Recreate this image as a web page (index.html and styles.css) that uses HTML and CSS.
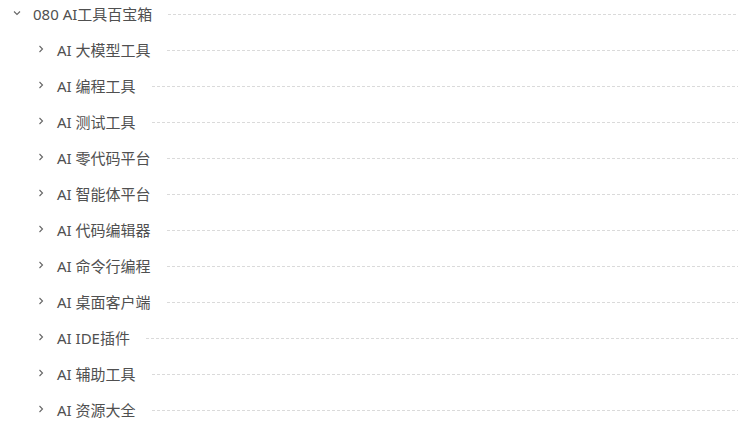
FILE: index.html
```html
<!DOCTYPE html>
<html lang="zh-CN">
<head>
    <meta charset="UTF-8">
    <meta name="viewport" content="width=device-width, initial-scale=1.0">
    <title>080 AI工具百宝箱</title>
    <link rel="stylesheet" href="styles.css">
</head>
<body>
    <ul class="toc">
        <li class="toc-item open">
            <div class="toc-row">
                <svg class="arrow" width="8" height="8" viewBox="0 0 8 8"><path d="M1 2.5 L4 5.5 L7 2.5"/></svg>
                <span class="toc-title">080 AI工具百宝箱</span>
                <span class="leader"></span>
            </div>
            <ul class="toc-children">
                <li class="toc-row child"><svg class="arrow" width="8" height="8" viewBox="0 0 8 8"><path d="M2.5 1 L5.5 4 L2.5 7"/></svg><span class="toc-title">AI 大模型工具</span><span class="leader"></span></li>
                <li class="toc-row child"><svg class="arrow" width="8" height="8" viewBox="0 0 8 8"><path d="M2.5 1 L5.5 4 L2.5 7"/></svg><span class="toc-title">AI 编程工具</span><span class="leader"></span></li>
                <li class="toc-row child"><svg class="arrow" width="8" height="8" viewBox="0 0 8 8"><path d="M2.5 1 L5.5 4 L2.5 7"/></svg><span class="toc-title">AI 测试工具</span><span class="leader"></span></li>
                <li class="toc-row child"><svg class="arrow" width="8" height="8" viewBox="0 0 8 8"><path d="M2.5 1 L5.5 4 L2.5 7"/></svg><span class="toc-title">AI 零代码平台</span><span class="leader"></span></li>
                <li class="toc-row child"><svg class="arrow" width="8" height="8" viewBox="0 0 8 8"><path d="M2.5 1 L5.5 4 L2.5 7"/></svg><span class="toc-title">AI 智能体平台</span><span class="leader"></span></li>
                <li class="toc-row child"><svg class="arrow" width="8" height="8" viewBox="0 0 8 8"><path d="M2.5 1 L5.5 4 L2.5 7"/></svg><span class="toc-title">AI 代码编辑器</span><span class="leader"></span></li>
                <li class="toc-row child"><svg class="arrow" width="8" height="8" viewBox="0 0 8 8"><path d="M2.5 1 L5.5 4 L2.5 7"/></svg><span class="toc-title">AI 命令行编程</span><span class="leader"></span></li>
                <li class="toc-row child"><svg class="arrow" width="8" height="8" viewBox="0 0 8 8"><path d="M2.5 1 L5.5 4 L2.5 7"/></svg><span class="toc-title">AI 桌面客户端</span><span class="leader"></span></li>
                <li class="toc-row child"><svg class="arrow" width="8" height="8" viewBox="0 0 8 8"><path d="M2.5 1 L5.5 4 L2.5 7"/></svg><span class="toc-title">AI IDE插件</span><span class="leader"></span></li>
                <li class="toc-row child"><svg class="arrow" width="8" height="8" viewBox="0 0 8 8"><path d="M2.5 1 L5.5 4 L2.5 7"/></svg><span class="toc-title">AI 辅助工具</span><span class="leader"></span></li>
                <li class="toc-row child"><svg class="arrow" width="8" height="8" viewBox="0 0 8 8"><path d="M2.5 1 L5.5 4 L2.5 7"/></svg><span class="toc-title">AI 资源大全</span><span class="leader"></span></li>
            </ul>
        </li>
    </ul>
</body>
</html>
```

FILE: styles.css
```css
body {
    margin: 0;
    background: #fff;
    font-family: "Noto Sans", "Noto Sans CJK SC", sans-serif;
    font-size: 15px;
    color: #505050;
}

ul {
    list-style: none;
    margin: 0;
    padding: 0;
}

.toc {
    margin-top: -1px;
}

.toc-children {
    display: flex;
    flex-direction: column;
    gap: 8px;
    margin-top: 8px;
}

.toc-row {
    display: flex;
    align-items: center;
    height: 28px;
    padding-left: 13px;
}

.toc-row.child {
    padding-left: 37px;
}

.arrow {
    flex: none;
    margin-right: 12px;
    fill: none;
    stroke: #666;
    stroke-width: 1.1;
}

.toc-title {
    flex: none;
    white-space: nowrap;
}

.leader {
    flex: 1;
    height: 1px;
    margin-left: 16px;
    margin-top: 2px;
    background: repeating-linear-gradient(to right, #dadada 0 3px, transparent 3px 5px);
}
```
